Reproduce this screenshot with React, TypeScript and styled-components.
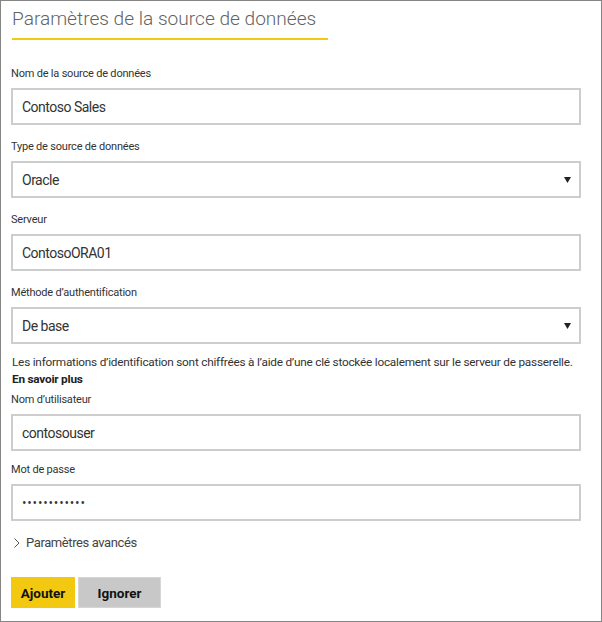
import React from "react";
import styled, { createGlobalStyle } from "styled-components";

const Global = createGlobalStyle`
  html, body { margin: 0; padding: 0; background: #ffffff; }
  * { box-sizing: border-box; }
`;

const FONT = `Roboto, "Open Sans", "Liberation Sans", sans-serif`;

const Frame = styled.div`
  width: 602px;
  height: 622px;
  border: 1px solid #858585;
  background: #ffffff;
  padding: 0 0 0 10px;
  font-family: ${FONT};
  color: #333333;
  display: flex;
  flex-direction: column;
  align-items: flex-start;
`;

const Title = styled.h1`
  margin: 5px 0 0 1px;
  width: 316px;
  padding: 0 0 6px 0;
  border-bottom: 2px solid #f2c811;
  font-size: 19.1px;
  line-height: 26px;
  font-weight: 300;
  color: #636363;
  white-space: nowrap;
`;

const Form = styled.form`
  display: flex;
  flex-direction: column;
  align-items: flex-start;
  margin-top: 26px;
  width: 570px;
`;

const Field = styled.div<{ $top?: number }>`
  display: flex;
  flex-direction: column;
  width: 100%;
  margin-top: ${(p) => (p.$top ?? 13)}px;
`;

const Label = styled.label`
  font-size: 11px;
  line-height: 16px;
  letter-spacing: -0.2px;
  color: #333333;
  margin-bottom: 6px;
`;

const TextInput = styled.input`
  width: 570px;
  height: 37px;
  border: 2px solid #cdcdcd;
  padding: 0 9px;
  margin: 0;
  font-family: ${FONT};
  font-size: 14px;
  letter-spacing: -0.5px;
  color: #333333;
  background: #ffffff;
  outline: none;
  &[type="password"] {
    font-family: "Open Sans", sans-serif;
    letter-spacing: 0.8px;
    font-size: 12px;
  }
`;

const SelectBox = styled.div`
  width: 570px;
  height: 37px;
  border: 2px solid #cdcdcd;
  padding: 0 7px 0 9px;
  display: flex;
  align-items: center;
  justify-content: space-between;
  font-size: 14px;
  letter-spacing: -0.5px;
  color: #333333;
`;

const Caret = styled.svg`
  width: 7px;
  height: 6px;
  margin-right: 1px;
`;

const Info = styled.p`
  margin: 10px 0 0 1px;
  font-size: 11.8px;
  line-height: 17px;
  letter-spacing: -0.23px;
  color: #333333;
  white-space: nowrap;
`;

const LearnMore = styled.a`
  display: block;
  font-weight: 700;
  color: #222222;
  text-decoration: none;
`;

const Advanced = styled.div`
  margin-top: 12px;
  display: flex;
  align-items: center;
  gap: 6px;
  font-size: 13px;
  letter-spacing: -0.4px;
  line-height: 20px;
  color: #444444;
  padding-left: 3px;
`;

const Chevron = styled.svg`
  width: 6px;
  height: 10px;
`;

const Buttons = styled.div`
  margin-top: 24px;
  display: flex;
  gap: 3px;
`;

const Button = styled.button<{ $primary?: boolean }>`
  height: 31px;
  width: ${(p) => (p.$primary ? 64 : 83)}px;
  border: 1px solid ${(p) => (p.$primary ? "#f2c811" : "#d6d6d6")};
  background: ${(p) => (p.$primary ? "#f2c811" : "#c8c8c8")};
  color: #111111;
  font-family: ${FONT};
  font-size: 13.5px;
  font-weight: 700;
  padding: 0;
  cursor: pointer;
`;

const ArrowDown = () => (
  <Caret viewBox="0 0 7 6">
    <path d="M0 0H7L3.5 6Z" fill="#222" />
  </Caret>
);

const Select = ({ value }: { value: string }) => (
  <SelectBox>
    <span>{value}</span>
    <ArrowDown />
  </SelectBox>
);

export default function App() {
  return (
    <>
      <Global />
      <Frame>
        <Title>Paramètres de la source de données</Title>
        <Form onSubmit={(e) => e.preventDefault()}>
          <Field $top={0}>
            <Label>Nom de la source de données</Label>
            <TextInput readOnly defaultValue="Contoso Sales" />
          </Field>
          <Field $top={14}>
            <Label>Type de source de données</Label>
            <Select value="Oracle" />
          </Field>
          <Field $top={14}>
            <Label>Serveur</Label>
            <TextInput readOnly defaultValue="ContosoORA01" />
          </Field>
          <Field $top={14}>
            <Label>Méthode d’authentification</Label>
            <Select value="De base" />
          </Field>
          <Info>
            Les informations d’identification sont chiffrées à l’aide d’une clé stockée localement sur le serveur de passerelle.
            <LearnMore href="#">En savoir plus</LearnMore>
          </Info>
          <Field $top={4}>
            <Label>Nom d’utilisateur</Label>
            <TextInput readOnly defaultValue="contosouser" />
          </Field>
          <Field $top={11}>
            <Label>Mot de passe</Label>
            <TextInput type="password" readOnly defaultValue="************" />
          </Field>
          <Advanced>
            <Chevron viewBox="0 0 6 10">
              <path d="M0.5 0.5L5 5L0.5 9.5" fill="none" stroke="#555" strokeWidth="1" />
            </Chevron>
            Paramètres avancés
          </Advanced>
          <Buttons>
            <Button $primary type="button">Ajouter</Button>
            <Button type="button">Ignorer</Button>
          </Buttons>
        </Form>
      </Frame>
    </>
  );
}
